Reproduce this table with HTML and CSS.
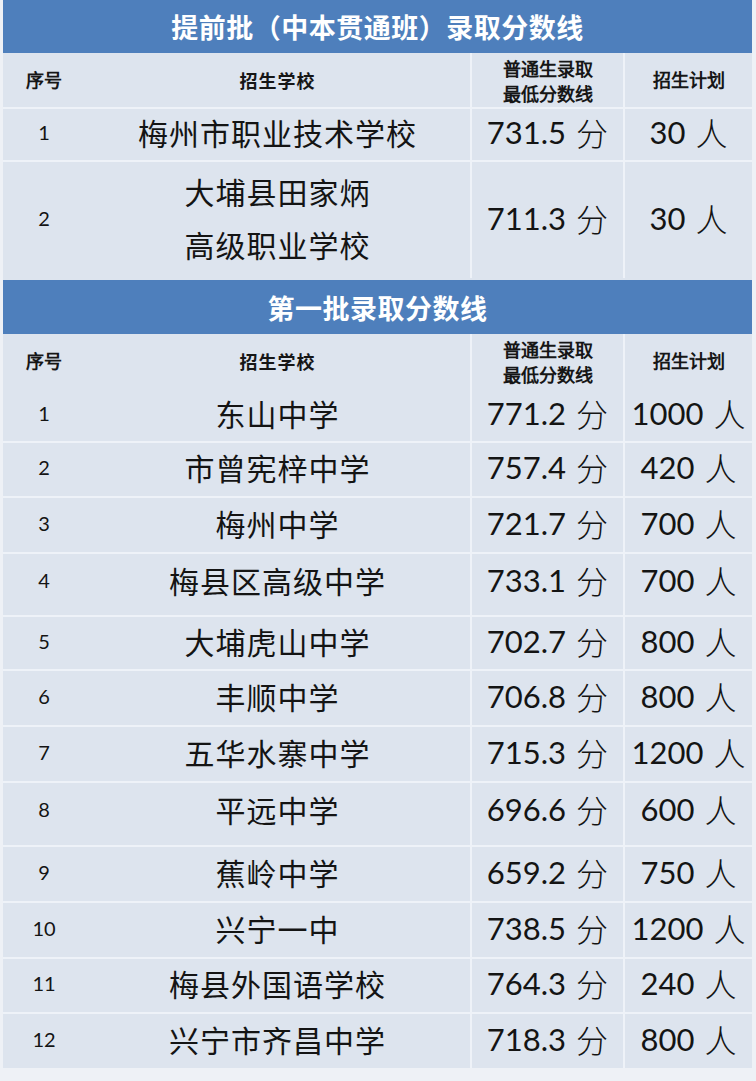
FILE: index.html
```html
<!DOCTYPE html>
<html lang="zh-CN">
<head>
<meta charset="utf-8">
<link rel="stylesheet" href="styles.css">
</head>
<body>
<div class="sheet">
  <div class="band b1">提前批（中本贯通班）录取分数线</div>
  <div class="row head h1">
    <div class="c no">序号</div>
    <div class="c school">招生学校</div>
    <div class="c score vl"><span>普通生录取<br>最低分数线</span></div>
    <div class="c plan vl">招生计划</div>
  </div>
  <div class="row r53">
    <div class="c no">1</div>
    <div class="c school">梅州市职业技术学校</div>
    <div class="c score vl">731.5<i>分</i></div>
    <div class="c plan vl">30<i>人</i></div>
  </div>
  <div class="row r118">
    <div class="c no">2</div>
    <div class="c school two">大埔县田家炳<br>高级职业学校</div>
    <div class="c score vl">711.3<i>分</i></div>
    <div class="c plan vl">30<i>人</i></div>
  </div>

  <div class="band b2">第一批录取分数线</div>
  <div class="row head h2">
    <div class="c no">序号</div>
    <div class="c school">招生学校</div>
    <div class="c score vl"><span>普通生录取<br>最低分数线</span></div>
    <div class="c plan vl">招生计划</div>
  </div>
  <div class="row r51 first">
    <div class="c no">1</div>
    <div class="c school">东山中学</div>
    <div class="c score vl">771.2<i>分</i></div>
    <div class="c plan vl">1000<i>人</i></div>
  </div>
  <div class="row r55">
    <div class="c no">2</div>
    <div class="c school">市曾宪梓中学</div>
    <div class="c score vl">757.4<i>分</i></div>
    <div class="c plan vl">420<i>人</i></div>
  </div>
  <div class="row r56">
    <div class="c no">3</div>
    <div class="c school">梅州中学</div>
    <div class="c score vl">721.7<i>分</i></div>
    <div class="c plan vl">700<i>人</i></div>
  </div>
  <div class="row r63 up">
    <div class="c no">4</div>
    <div class="c school">梅县区高级中学</div>
    <div class="c score vl">733.1<i>分</i></div>
    <div class="c plan vl">700<i>人</i></div>
  </div>
  <div class="row r54">
    <div class="c no">5</div>
    <div class="c school">大埔虎山中学</div>
    <div class="c score vl">702.7<i>分</i></div>
    <div class="c plan vl">800<i>人</i></div>
  </div>
  <div class="row r56">
    <div class="c no">6</div>
    <div class="c school">丰顺中学</div>
    <div class="c score vl">706.8<i>分</i></div>
    <div class="c plan vl">800<i>人</i></div>
  </div>
  <div class="row r56">
    <div class="c no">7</div>
    <div class="c school">五华水寨中学</div>
    <div class="c score vl">715.3<i>分</i></div>
    <div class="c plan vl">1200<i>人</i></div>
  </div>
  <div class="row r64 up">
    <div class="c no">8</div>
    <div class="c school">平远中学</div>
    <div class="c score vl">696.6<i>分</i></div>
    <div class="c plan vl">600<i>人</i></div>
  </div>
  <div class="row r56">
    <div class="c no">9</div>
    <div class="c school">蕉岭中学</div>
    <div class="c score vl">659.2<i>分</i></div>
    <div class="c plan vl">750<i>人</i></div>
  </div>
  <div class="row r56">
    <div class="c no">10</div>
    <div class="c school">兴宁一中</div>
    <div class="c score vl">738.5<i>分</i></div>
    <div class="c plan vl">1200<i>人</i></div>
  </div>
  <div class="row r55">
    <div class="c no">11</div>
    <div class="c school">梅县外国语学校</div>
    <div class="c score vl">764.3<i>分</i></div>
    <div class="c plan vl">240<i>人</i></div>
  </div>
  <div class="row r56 last">
    <div class="c no">12</div>
    <div class="c school">兴宁市齐昌中学</div>
    <div class="c score vl">718.3<i>分</i></div>
    <div class="c plan vl">800<i>人</i></div>
  </div>
</div>
</body>
</html>
```

FILE: styles.css
```css
html, body {
  margin: 0;
  padding: 0;
}
body {
  background: #eef1f6;
  width: 756px;
  height: 1081px;
  overflow: hidden;
  font-family: "Noto Sans CJK SC", "Noto Sans", sans-serif;
  color: #141414;
}
.sheet {
  margin-left: 3px;
  width: 749px;
  background: #dde4ee;
}
.band {
  background: #4e7fbc;
  color: #ffffff;
  font-weight: 700;
  font-size: 27px;
  letter-spacing: 0.5px;
  text-align: center;
  display: flex;
  align-items: center;
  justify-content: center;
}
.b1 { height: 53px; }
.b2 { height: 54px; margin-top: 2px; }

.row {
  display: grid;
  grid-template-columns: 82px 385px 153px 129px;
  box-sizing: border-box;
  border-top: 2px solid #eef2f8;
}
.head { border-top: none; }
.h1 { height: 54px; }
.h2 { height: 56px; }
.row.first { border-top: none; }
.r51 { height: 51px; }
.r53 { height: 53px; }
.r54 { height: 54px; }
.r55 { height: 55px; }
.r56 { height: 56px; }
.r63 { height: 63px; }
.r64 { height: 64px; }
.r118 { height: 118px; }

.c {
  display: flex;
  align-items: center;
  justify-content: center;
  text-align: center;
  box-sizing: border-box;
  padding-bottom: 5px;
}
.vl { border-left: 2px solid #eef2f8; }

.head .c {
  font-weight: 700;
  font-size: 18px;
  line-height: 25px;
  color: #161616;
  padding-bottom: 4px;
}
.head .score span { display: block; padding-top: 4px; }

.no {
  font-family: Lato, "Liberation Sans", sans-serif;
  font-size: 20px;
}
.school {
  font-size: 30px;
  letter-spacing: 1px;
  line-height: 36px;
}
.school.two { line-height: 53px; padding-bottom: 4px; }
.score, .plan {
  font-family: Lato, "Liberation Sans", sans-serif;
  font-size: 31px;
}
.score i, .plan i {
  font-style: normal;
  font-family: "Noto Sans CJK SC", sans-serif;
  font-weight: 300;
  font-size: 32px;
  margin-left: 10px;
}
.up .c { padding-bottom: 10px; }
```
